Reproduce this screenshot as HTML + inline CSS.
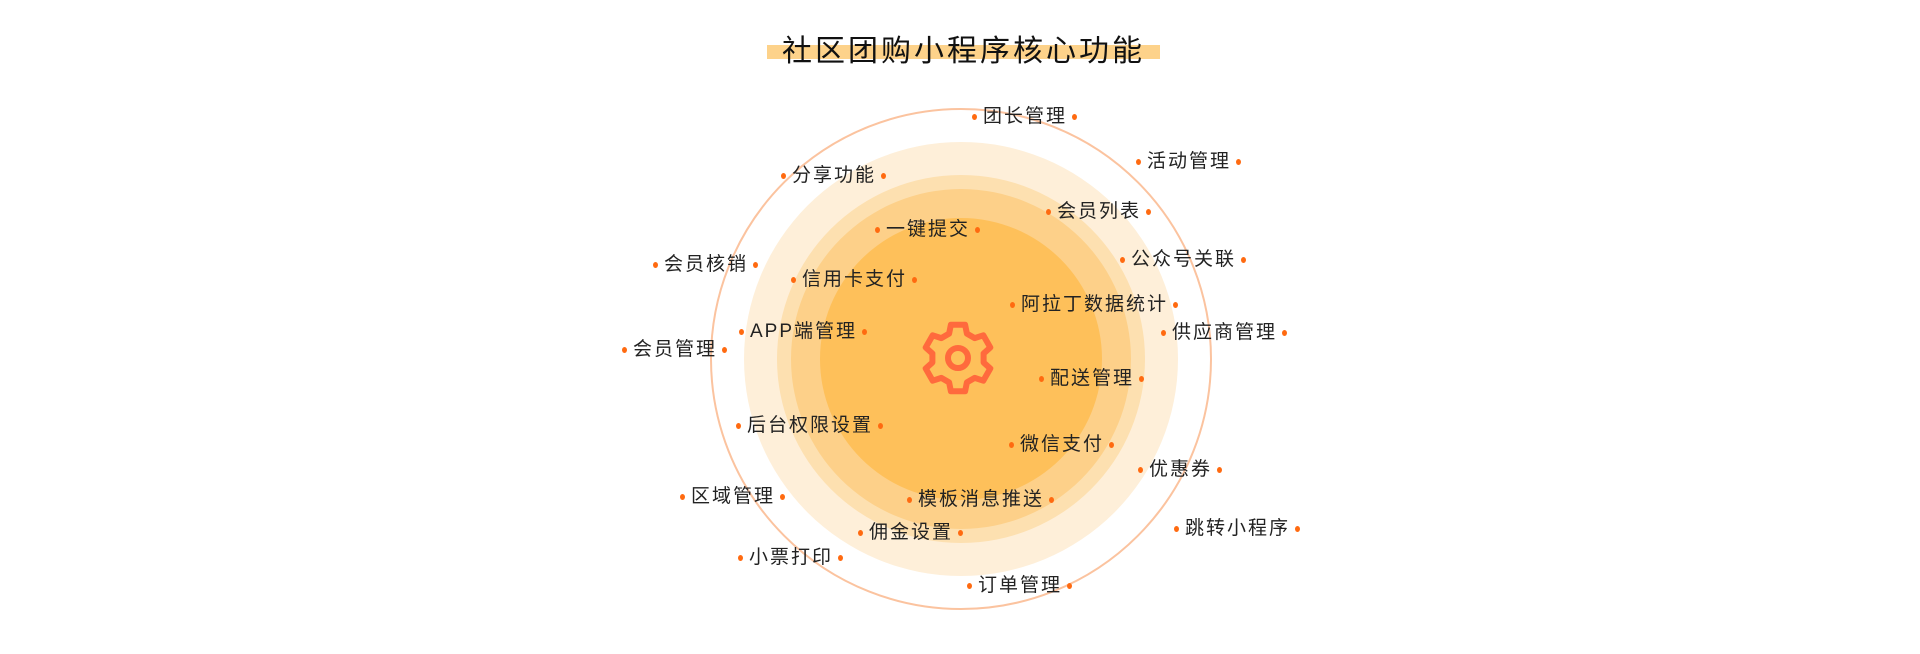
<!DOCTYPE html>
<html><head><meta charset="utf-8"><style>
html,body{margin:0;padding:0;background:#fff;}
body{width:1920px;height:654px;position:relative;overflow:hidden;font-family:"Liberation Sans","Noto Sans CJK SC",sans-serif;}
.t{position:absolute;left:767px;top:45px;width:393px;height:14px;background:#fdd28a;}
.tt{position:absolute;left:767px;top:32px;width:393px;text-align:center;font-size:30px;line-height:40px;color:#111;letter-spacing:3px;}
.i{position:absolute;height:24px;line-height:24px;font-size:19px;letter-spacing:2px;color:#222;white-space:nowrap;display:flex;align-items:center;margin-left:-2px;}
.i::before,.i::after{content:"";width:5px;height:6px;border-radius:50%;background:#ff6a10;display:inline-block;}
.i::before{margin-right:6px;}
.i::after{margin-left:5px;}
</style></head><body>
<svg width="1920" height="654" style="position:absolute;left:0;top:0">
<circle cx="961" cy="359" r="250" fill="none" stroke="#fbc39f" stroke-width="2"/>
<circle cx="961" cy="359" r="217" fill="#feefd9"/>
<circle cx="961" cy="359" r="184" fill="#fde0b0"/>
<circle cx="961" cy="359" r="170" fill="#fdd089"/>
<circle cx="961" cy="359" r="141" fill="#fec05a"/>
<g transform="translate(918,318)" fill="none" stroke="#ff6a3d" stroke-width="6" stroke-linejoin="round">
<polygon points="31.1,15.6 32.9,6.7 47.1,6.7 48.9,15.6 56.7,20.1 65.3,17.3 72.3,29.5 65.6,35.5 65.6,44.5 72.3,50.5 65.3,62.7 56.7,59.9 48.9,64.4 47.1,73.3 32.9,73.3 31.1,64.4 23.3,59.9 14.7,62.7 7.7,50.5 14.4,44.5 14.4,35.5 7.7,29.5 14.7,17.3 23.3,20.1"/>
<circle cx="40" cy="40" r="10"/>
</g>
</svg>
<div class="t"></div>
<div class="tt">社区团购小程序核心功能</div>
<div class="i" style="left:974px;top:105px">团长管理</div>
<div class="i" style="left:1138px;top:150px">活动管理</div>
<div class="i" style="left:783px;top:164px">分享功能</div>
<div class="i" style="left:1048px;top:200px">会员列表</div>
<div class="i" style="left:877px;top:218px">一键提交</div>
<div class="i" style="left:655px;top:253px">会员核销</div>
<div class="i" style="left:1122px;top:248px">公众号关联</div>
<div class="i" style="left:793px;top:268px">信用卡支付</div>
<div class="i" style="left:1012px;top:293px">阿拉丁数据统计</div>
<div class="i" style="left:741px;top:320px">APP端管理</div>
<div class="i" style="left:1163px;top:321px">供应商管理</div>
<div class="i" style="left:624px;top:338px">会员管理</div>
<div class="i" style="left:1041px;top:367px">配送管理</div>
<div class="i" style="left:738px;top:414px">后台权限设置</div>
<div class="i" style="left:1011px;top:433px">微信支付</div>
<div class="i" style="left:1140px;top:458px">优惠券</div>
<div class="i" style="left:682px;top:485px">区域管理</div>
<div class="i" style="left:909px;top:488px">模板消息推送</div>
<div class="i" style="left:1176px;top:517px">跳转小程序</div>
<div class="i" style="left:860px;top:521px">佣金设置</div>
<div class="i" style="left:740px;top:546px">小票打印</div>
<div class="i" style="left:969px;top:574px">订单管理</div>
</body></html>
